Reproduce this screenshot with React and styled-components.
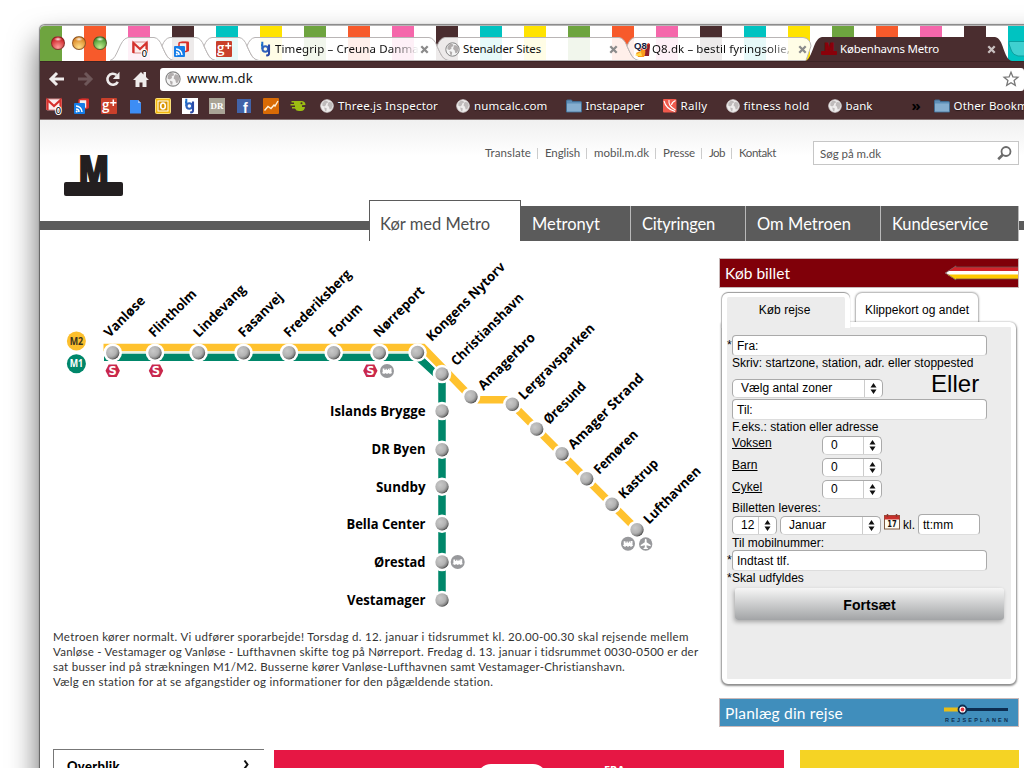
import React, { useLayoutEffect, useRef } from 'react';
import styled, { createGlobalStyle } from 'styled-components';

const ui = '"Noto Sans", "Open Sans", sans-serif';
const humanist = 'Lato, "Liberation Sans", sans-serif';
const chrome = '#4a2d2f';
const grey = '#5b5b5b';

const GlobalStyle = createGlobalStyle`
  html, body { margin: 0; height: 768px; overflow: hidden; background: #fff; }
  * { box-sizing: border-box; }
  svg { display: block; overflow: visible; flex: none; }
`;

/* ---------- text that is tracked to a fixed measure ---------- */
const Line = styled.span`
  display: inline-block;
  white-space: nowrap;
`;

function Fit({ w, children }) {
  const ref = useRef(null);
  useLayoutEffect(() => {
    const el = ref.current;
    el.style.letterSpacing = '0px';
    const natural = el.getBoundingClientRect().width;
    el.style.letterSpacing = `${(w - natural) / el.textContent.length}px`;
  }, [w]);
  return <Line ref={ref}>{children}</Line>;
}

/* ---------- window ---------- */
const Desktop = styled.div`
  width: 1024px;
  height: 768px;
  overflow: hidden;
  padding: 25px 0 0 40px;
`;

const Window = styled.div`
  width: 1100px;
  height: 1000px;
  background: #fff;
  border-radius: 5px 0 0 0;
  box-shadow: 0 0 1px 0.5px rgba(0, 0, 0, 0.45), 0 17px 30px 1px rgba(0, 0, 0, 0.6);
`;

const TabStrip = styled.div`
  height: 36px;
  padding: 11px 0 0 0;
  display: flex;
  border-top: 1px solid #b5b5b5;
  border-radius: 5px 0 0 0;
  background: repeating-linear-gradient(
    90deg,
    #6ea43f 0 22px, #fff 22px 44px,
    #f75a2b 44px 66px, #fff 66px 88px,
    #f567ab 88px 110px, #fff 110px 132px,
    #4a2d2f 132px 154px, #fff 154px 176px,
    #00c3c1 176px 198px, #fff 198px 220px,
    #ffe300 220px 242px, #fff 242px 264px
  );
`;

const Lights = styled.div`
  width: 70px;
  display: flex;
  gap: 7px;
  padding-left: 11px;
  margin-top: -1px;
`;

const Light = styled.span`
  width: 14px;
  height: 14px;
  border-radius: 50%;
  border: 1px solid rgba(70, 30, 20, 0.55);
  background: radial-gradient(ellipse 4px 2px at 50% 18%, rgba(255, 255, 255, 0.95), transparent),
    radial-gradient(circle at 50% 85%, ${(p) => p.$glow} 0, ${(p) => p.$tone} 70%);
`;

const TabBox = styled.div`
  position: relative;
  width: ${(p) => p.$w}px;
  height: 24px;
  display: flex;
  align-items: center;
  padding-left: ${(p) => p.$pad}px;
  gap: ${(p) => p.$gap ?? 3}px;
  font: 11.5px/22px ${ui};
  color: ${(p) => (p.$active ? '#fff' : '#111')};
  z-index: ${(p) => (p.$active ? 1 : 0)};
  > * { position: relative; }
`;

const TabShape = styled.svg`
  && { position: absolute; left: 0; top: 0; }
`;

const TabLabel = styled.span`
  flex: 1;
  min-width: 0;
  overflow: hidden;
  white-space: nowrap;
  mask-image: ${(p) => (p.$fade ? 'linear-gradient(90deg, #000 80%, transparent 100%)' : 'none')};
`;

const CloseMark = styled.span`
  width: 9px;
  margin-right: ${(p) => p.$mr}px;
`;

function Close({ mr, color = '#8b8b8b' }) {
  return (
    <CloseMark $mr={mr}>
      <svg width="9" height="9" viewBox="0 0 9 9">
        <path d="M1.3 1.3 7.7 7.7M7.7 1.3 1.3 7.7" stroke={color} strokeWidth="2.3" />
      </svg>
    </CloseMark>
  );
}

function Tab({ w, kind = 'mid', pad, gap, children }) {
  const shapes = {
    first: `M0 23.5C8 22 9 2 18 .5H${w - 8}Q${w - 3} 1 ${w} 9C${w + 5} 20 ${w + 6} 22 ${w + 12} 23.5Z`,
    mid: `M12 23.5C6 22 5 20 0 9Q3 1 8 .5H${w - 8}Q${w - 3} 1 ${w} 9C${w + 5} 20 ${w + 6} 22 ${w + 12} 23.5Z`,
    last: `M12 23.5C6 22 5 20 0 9Q3 1 8 .5H${w - 8}Q${w - 1} 1 ${w} 9L${w - 5} 23.5Z`,
    active: `M-6 24C2 22 2 1 11 0H${w - 15}C${w - 6} 1 ${w - 7} 22 ${w + 2} 24Z`,
  };
  const active = kind === 'active';
  return (
    <TabBox $w={w} $pad={pad} $gap={gap} $active={active}>
      <TabShape width={w} height="24">
        <path d={shapes[kind]} fill={active ? chrome : 'rgba(255,255,255,.9)'} stroke={active ? 'none' : '#b9b5b5'} />
      </TabShape>
      {children}
    </TabBox>
  );
}

/* ---------- small icons ---------- */
const Gmail = () => (
  <svg width="17" height="17" viewBox="0 0 17 17">
    <rect x="0.5" y="1" width="15" height="11" rx="1" fill="#fbeeee" stroke="#d98c8c" />
    <path d="M1.5 12V2L8 8l6.500-6v10" fill="none" stroke="#d6312d" strokeWidth="2.2" />
    <text x="9.500" y="16" fontFamily="DejaVu Sans" fontSize="9" fill="#000" stroke="#fff" strokeWidth="2" paintOrder="stroke">0</text>
  </svg>
);
const Reader = () => (
  <svg width="16" height="16" viewBox="0 0 16 16">
    <rect x="7" y="0.500" width="8" height="10" rx="1" fill="#d9302a" />
    <rect x="5" y="1.500" width="8" height="9" rx="1" fill="#f1f1f1" stroke="#d9302a" strokeWidth="1.500" />
    <rect x="0" y="5" width="11" height="11" rx="1" fill="#157de8" />
    <path d="M2 8a6 6 0 0 1 6 6M2 11a3 3 0 0 1 3 3" fill="none" stroke="#fff" strokeWidth="1.500" />
    <circle cx="2.700" cy="13.400" r="1" fill="#fff" />
  </svg>
);
const GPlus = () => (
  <svg width="16" height="16" viewBox="0 0 16 16">
    <rect width="16" height="16" rx="1" fill="#c9402b" />
    <text x="1" y="11.500" fontFamily="Open Sans" fontWeight="600" fontSize="13.500" fill="#fff">g</text>
    <path d="M12.300 1.500v6.500M9.200 4.800h6.200" stroke="#fff" strokeWidth="1.500" />
  </svg>
);
const Doc = () => (
  <svg width="12" height="15" viewBox="0 0 12 15">
    <path d="M0 1h8l3 3v10.500H0z" fill="#3d8df5" />
    <path d="M8 1v3h3" fill="#9fc6fb" />
  </svg>
);
const Outlook = () => (
  <svg width="16" height="16" viewBox="0 0 16 16">
    <rect x=".5" y=".5" width="15" height="15" rx="1" fill="#f2b70f" stroke="#fbe07a" />
    <rect x="3" y="3" width="10" height="10" fill="#d99400" stroke="#fff" />
    <ellipse cx="8" cy="8" rx="2.300" ry="3" fill="none" stroke="#fff" strokeWidth="1.600" />
  </svg>
);
const Timegrip = ({ bg = 'none' }) => (
  <svg width="16" height="16" viewBox="0 0 16 16">
    <rect width="16" height="16" fill={bg} />
    <path d="M4.300 .8V8.300M3 4.300h2" fill="none" stroke="#1d6fc9" strokeWidth="2" />
    <circle cx="7.300" cy="8" r="2.800" fill="none" stroke="#2f63bd" strokeWidth="2" />
    <path d="M11 3.500V12.500Q11 14.800 8.200 14.300" fill="none" stroke="#2b4aa6" strokeWidth="2.100" />
  </svg>
);
const Dr = () => (
  <svg width="16" height="16" viewBox="0 0 16 16">
    <rect width="16" height="16" fill="#a9a496" />
    <text x="1.500" y="10.500" fontFamily="Liberation Serif" fontWeight="700" fontSize="7.500" textLength="13" lengthAdjust="spacingAndGlyphs" fill="#fff">DR</text>
  </svg>
);
const Facebook = () => (
  <svg width="14" height="14" viewBox="0 0 14 14">
    <rect width="14" height="14" fill="#4263a8" />
    <text x="6" y="13.500" fontFamily="Liberation Sans" fontWeight="700" fontSize="14" fill="#fff">f</text>
  </svg>
);
const Analytics = () => (
  <svg width="16" height="16" viewBox="0 0 16 16">
    <rect width="16" height="16" rx="1" fill="#d96b05" />
    <path d="M1.500 12.500 5 8.500l3 2 3-3.500 1 1 3-5" fill="none" stroke="#fff0d8" strokeWidth="1.400" />
  </svg>
);
const Endomondo = () => (
  <svg width="16" height="14" viewBox="0 0 16 14">
    <path d="M5 2H12Q15.500 2.500 15.500 6L12 6.300V8h3q-.5 4-4 4H9Q6 12 5 9.500H2V8h3V6.500H.5V5H4V3.500H1.500V2z" fill="#9cbd12" />
    <circle cx="11.500" cy="4.300" r="1" fill={chrome} />
  </svg>
);
const Globe = ({ size = 15, outline }) => (
  <svg width={size} height={size} viewBox="0 0 15 15">
    <circle cx="7.500" cy="7.500" r="6.700" fill={outline ? '#f4f4f4' : '#efeded'} stroke={outline ? '#858585' : '#dcd8d8'} />
    <path
      d="M2.500 4.500 5 1.800l3 .4.500 1.800L6.300 5l.2 1.500L4.500 8l-2-.8zM9.500 3l3 .8 1.200 3-1.500 4-1.800.4-.8-3-1.500-1.200.6-2.500zM4.500 9l2.700 1-.4 3-1.500-.3z"
      fill="#a5a0a0"
      opacity={outline ? 0.85 : 0.65}
    />
  </svg>
);
const Folder = () => (
  <svg width="16" height="14" viewBox="0 0 16 14">
    <path d="M.5 2q0-1 1-1h4l1 1.500h8q1 0 1 1V13H.5z" fill="#5f8fb8" stroke="#426d92" />
    <path d="M1 4.500h14V12.500H1z" fill="#86aecf" />
  </svg>
);
const RallyIcon = () => (
  <svg width="14" height="14" viewBox="0 0 14 14">
    <rect width="13.500" height="13.500" rx="1" fill="#f0594c" />
    <path d="M1 2q2 8 11 10.500M6 1q-1 6 6.500 10M12.500 1.500Q9 3 8.500 6" fill="none" stroke="#fff" strokeWidth="1.100" />
  </svg>
);
const Q8 = () => (
  <svg width="17" height="17" viewBox="0 0 17 17">
    <path d="M4 7 15 2l1 2-2 11H6z" fill="#d9331c" />
    <path d="M2 12 10 8l2 3-2 5H4z" fill="#f99b1c" />
    <path d="M1 14l6-3 1 4H3z" fill="#ffd84a" />
    <path d="M12 5l4-2-1 12h-4z" fill="#8c1f2d" />
    <text x="0" y="7.500" fontFamily="Liberation Sans" fontWeight="700" fontSize="9.500" fill="#111b40" stroke="#fff" strokeWidth="1" paintOrder="stroke">Q8</text>
  </svg>
);
const MetroIcon = () => (
  <svg width="16" height="14" viewBox="0 0 16 14">
    <rect y="9" width="16" height="4" rx="1" fill="#8a0009" />
    <text x="3.500" y="10" fontFamily="Open Sans" fontWeight="800" fontSize="12.500" textLength="9.500" lengthAdjust="spacingAndGlyphs" fill="#8a0009" stroke="#8a0009">M</text>
  </svg>
);

/* ---------- toolbar + bookmarks ---------- */
const Toolbar = styled.div`
  height: 32px;
  background: ${chrome};
  border-top: 1px solid #3d2425;
  display: flex;
  align-items: center;
  padding: 3px 0 0 9px;
`;
const NavIcon = styled.span`
  width: ${(p) => p.$w}px;
  opacity: ${(p) => (p.$dim ? 0.22 : 1)};
`;
const Omnibox = styled.div`
  width: 864px;
  height: 23px;
  margin-top: 0;
  background: #fff;
  border-radius: 3px;
  display: flex;
  align-items: center;
  padding: 0 5px;
  gap: 6px;
  font: 13px/20px ${ui};
  color: #111;
`;
const Address = styled.span`
  padding-bottom: 2px;
`;
const Spacer = styled.span`
  flex: 1;
`;
const Bookmarks = styled.div`
  height: 27px;
  background: ${chrome};
  border-bottom: 1px solid #857474;
  display: flex;
  align-items: center;
  font: 11.5px/20px ${ui};
  color: #fff;
`;
const Favicons = styled.div`
  display: grid;
  grid-template-columns: repeat(10, 27px);
  justify-items: center;
  align-items: center;
  margin: 0 9px 0 1px;
`;
const Links = styled.div`
  display: flex;
  gap: 18px;
`;
const Bookmark = styled.div`
  display: flex;
  align-items: center;
  gap: 4px;
  text-shadow: 0 1px 1px rgba(0, 0, 0, 0.5);
`;
const More = styled.span`
  margin: -2px 13px 0 39px;
  width: 9px;
  color: #000;
  font: 700 15px/16px ${ui};
`;

/* ---------- page header ---------- */
const Page = styled.div`
  background: linear-gradient(#f0f0f0, #fff 36px);
  font-family: ${humanist};
`;
const Header = styled.header`
  height: 80px;
  display: flex;
`;
const LogoBox = styled.div`
  width: 445px;
  padding: 34px 0 0 24px;
`;
const TopLinks = styled.div`
  width: 328px;
  padding-top: 25px;
  height: 40px;
  display: flex;
  font-size: 11.5px;
  line-height: 15px;
  color: #555;
`;
const TopLink = styled.a`
  padding: 0 7px;
  border-left: 1px solid #ccc;
  height: 11px;
  line-height: 10px;
  margin-top: 3px;
  margin-right: -1px;
  &:first-child {
    padding-left: 0;
    border-left: 0;
  }
`;
const Search = styled.div`
  width: 206px;
  height: 24px;
  margin-top: 21px;
  border: 1px solid #c6c6c6;
  background: #fff;
  display: flex;
  align-items: center;
  padding: 1px 6px 0;
  justify-content: space-between;
  font-size: 11.5px;
  color: #555;
`;
const Nav = styled.nav`
  height: 41px;
  display: flex;
  align-items: flex-end;
  padding-left: 329px;
  background: linear-gradient(${grey}, ${grey}) 0 21px / 100% 9px no-repeat;
`;
const NavTab = styled.a`
  width: ${(p) => p.$w}px;
  height: ${(p) => (p.$active ? 41 : 35)}px;
  padding: ${(p) => (p.$active ? '8px 0 0 10px' : '3px 0 0 11px')};
  font-size: 16.5px;
  line-height: 31px;
  color: ${(p) => (p.$active ? '#4f4f4f' : '#fff')};
  background: ${(p) => (p.$active ? '#fff' : grey)};
  border: solid ${grey};
  border-width: ${(p) => (p.$active ? '1px 1px 0 1px' : '0')};
  border-right: 1px solid ${(p) => (p.$active ? grey : '#b9b9b9')};
`;

/* ---------- main ---------- */
const Main = styled.main`
  height: 509px;
  display: flex;
`;
const Left = styled.section`
  width: 679px;
`;
const Notice = styled.div`
  padding: 9px 0 0 13px;
  font-size: 11.5px;
  line-height: 15px;
  color: #333;
  display: flex;
  flex-direction: column;
  align-items: flex-start;
`;
const Sidebar = styled.aside`
  width: 300px;
  padding-top: 17px;
`;
const TitleBar = styled.div`
  height: ${(p) => p.$h}px;
  border: 1px solid #c9b9b9;
  background: ${(p) => p.$tone};
  color: #fff;
  font-size: 15.5px;
  line-height: 26px;
  display: flex;
  justify-content: space-between;
  align-items: center;
  padding: 0 0 0 5px;
`;
const Booking = styled.div`
  margin: 5px 3px 14px;
  font: 12px/15px "Liberation Sans", Arial, sans-serif;
  letter-spacing: 0.04px;
  color: #000;
`;
const BookingTabs = styled.div`
  display: flex;
  gap: 6px;
  height: 29px;
`;
const BookingTab = styled.div`
  position: relative;
  z-index: ${(p) => (p.$active ? 2 : 0)};
  width: ${(p) => p.$w}px;
  height: ${(p) => (p.$active ? 35 : 30)}px;
  border: solid #fff;
  border-width: 4px 5px 0;
  border-radius: 6px 6px 0 0;
  background: ${(p) => (p.$active ? '#ececec' : '#fff')};
  background-clip: padding-box;
  box-shadow: ${(p) => (p.$active ? '0 -1px 1px #999, -1px 0 1px #bbb' : '0 0 2px 1px #aaa')};
  text-align: center;
  line-height: 27px;
  padding-right: ${(p) => (p.$active ? 3 : 0)}px;
  white-space: nowrap;
  clip-path: inset(-3px -3px ${(p) => (p.$active ? 0 : 1)}px -3px);
`;
const Panel = styled.div`
  position: relative;
  z-index: 1;
  height: 362px;
  border: 5px solid #fff;
  border-radius: 2px 6px 6px 6px;
  background: #ececec;
  box-shadow: 0 1px 2px 1px rgba(0, 0, 0, 0.45);
  padding: 8px 0 0 5px;
`;
const Required = styled.div`
  display: flex;
  margin-left: -5px;
  &::before {
    content: '*';
    width: 5px;
    line-height: ${(p) => p.$lh ?? 21}px;
  }
`;
const Field = styled.div`
  width: ${(p) => p.$w ?? 255}px;
  height: 21px;
  border: 1px solid #aaa;
  border-bottom-color: #ddd;
  border-radius: 4px;
  background: #fff;
  padding-left: 4px;
  line-height: 20px;
`;
const Hint = styled.div`
  height: ${(p) => p.$h ?? 15}px;
  line-height: 15px;
  white-space: nowrap;
`;
const Row = styled.div`
  display: flex;
  align-items: flex-start;
  height: ${(p) => p.$h}px;
  padding-top: ${(p) => p.$top ?? 0}px;
`;
const SelectBox = styled.div`
  width: ${(p) => p.$w}px;
  height: 19px;
  border: 1px solid #aaa;
  border-bottom-color: #d5d5d5;
  border-radius: 5px;
  background: #fff;
  display: flex;
  padding-left: ${(p) => p.$pad ?? 8}px;
  line-height: 17px;
  margin-top: ${(p) => p.$mt ?? 0}px;
  margin-right: ${(p) => p.$mr ?? 0}px;
`;
const Stepper = styled.span`
  width: 18px;
  margin-left: auto;
  border-left: 1px solid #ccc;
  display: grid;
  place-items: center;
`;
const Or = styled.div`
  margin: -9px 0 0 48px;
  font-size: 24px;
  line-height: 28px;
`;
const Passenger = styled.span`
  width: 90px;
  text-decoration: underline;
  line-height: 17px;
  text-underline-offset: 1px;
`;
const Kl = styled.span`
  width: 18px;
  padding-left: 3px;
  line-height: 22px;
`;
const Continue = styled.div`
  width: 269px;
  height: 32px;
  margin: 2px 0 0 3px;
  border-radius: 3px;
  background: linear-gradient(#f6f6f6, #a2a4a6);
  box-shadow: -1px 2px 4px rgba(0, 0, 0, 0.3);
  font-weight: 700;
  font-size: 14px;
  line-height: 34px;
  text-align: center;
`;

function Select({ children, ...p }) {
  return (
    <SelectBox {...p}>
      {children}
      <Stepper>
        <svg width="7" height="11" viewBox="0 0 7 11">
          <path d="M.5 4.500 3.500 0l3 4.500zM.5 6.500h6L3.500 11z" fill="#111" />
        </svg>
      </Stepper>
    </SelectBox>
  );
}

/* ---------- promo row ---------- */
const Promos = styled.div`
  display: flex;
  padding-left: 13px;
  height: 200px;
  margin-top: -1px;
`;
const Overview = styled.div`
  width: 211px;
  border: solid #777;
  border-width: 1px 0 0 1px;
  padding: 8px 13px;
  display: flex;
  align-items: flex-start;
  justify-content: space-between;
  font-size: 13px;
  font-weight: 900;
  line-height: 16px;
`;
const RedPromo = styled.div`
  width: 510px;
  margin: 1px 16px 0 10px;
  background: #e61744;
  display: flex;
  padding: 14px 0 0 203px;
  gap: 57px;
  color: #fff;
  font: 700 11px/12px ${ui};
`;
const Pill = styled.span`
  width: 70px;
  height: 40px;
  border-radius: 14px;
  background: #fff;
`;
const YellowPromo = styled.div`
  width: 219px;
  margin-top: 1px;
  background: #f5d324;
`;

/* ---------- metro map ---------- */
const diagonal = [
  ['Vanløse', 109.6, 338, 51.5], ['Flintholm', 154.2, 338, 61], ['Lindevang', 198.8, 338, 67.5],
  ['Fasanvej', 243.8, 338, 56.5], ['Frederiksberg', 289.2, 338, 89], ['Forum', 334.2, 338, 41],
  ['Nørreport', 379, 338, 65.5], ['Kongens Nytorv', 431.8, 342, 105], ['Christianshavn', 456.5, 366.5, 96],
  ['Amagerbro', 483.5, 391, 74.5], ['Lergravsparken', 524, 400.5, 101], ['Øresund', 549, 425, 53.5],
  ['Amager Strand', 573.5, 450, 100.4], ['Femøren', 599.2, 475, 56], ['Kastrup', 624, 499.5, 49.5],
  ['Lufthavnen', 649, 524.7, 74.5],
];
const vertical = [
  ['Islands Brygge', 411, 95.5], ['DR Byen', 449.5, 54], ['Sundby', 486.7, 49.5],
  ['Bella Center', 524, 79], ['Ørestad', 562, 51.5], ['Vestamager', 600, 78.5],
];
const stops = [
  [112.7, 352.7], [155, 352.7], [198.5, 352.7], [243.5, 352.7], [289, 352.7], [333.7, 352.7],
  [379.3, 352.7], [417.5, 352.5], [442, 374], [471, 396.7], [512.3, 404.3], [536.7, 429],
  [562, 453.7], [586.7, 478.7], [612, 504.3], [637, 529.7],
  [442, 411], [442, 449.7], [442, 486.7], [442, 523.7], [442, 562], [442, 600],
];

const STrain = ({ x, y }) => (
  <g transform={`translate(${x} ${y})`}>
    <path d="M-7.200 0-4-6.200H4L7.200 0 4 6.200H-4z" fill="#c9284c" />
    <text x="0" y="4.200" textAnchor="middle" fontFamily="DejaVu Sans" fontWeight="700" fontSize="11.500" fill="#fff">S</text>
  </g>
);
const Train = ({ x, y }) => (
  <g transform={`translate(${x} ${y})`}>
    <circle r="7" fill="#98999c" />
    <path d="M-4.300-1V-2.500h1.800V-1h1V-2.300H-.2V-1h1V-2.300H2V-1h.5V-2.800H4.500V1.500H5v.8H-5V1.500h.7z" fill="#fff" />
    <path d="M-3.800 2.300h1.600v.7h-1.600zM-.8 2.300H.8v.7H-.8zM2.200 2.300h1.600v.7H2.200z" fill="#fff" />
  </g>
);
const Badge = ({ y, fill, color, label }) => (
  <g>
    <circle cx="76.400" cy={y} r="9.500" fill={fill} />
    <text x="76.400" y={y + 3.6} textAnchor="middle" fontFamily="Open Sans" fontWeight="700" fontSize="10" textLength="13.500" lengthAdjust="spacingAndGlyphs" fill={color}>{label}</text>
  </g>
);

function MetroMap() {
  const label = { fontFamily: 'Open Sans', fontWeight: 700, fontSize: 13.4, lengthAdjust: 'spacingAndGlyphs' };
  return (
    <svg width="679" height="379" viewBox="40 241 679 379">
      <defs>
        <radialGradient id="stop" cx="36%" cy="36%" r="68%">
          <stop offset="0" stopColor="#c9c9c9" />
          <stop offset=".6" stopColor="#b2b2b2" />
          <stop offset=".85" stopColor="#858585" />
          <stop offset="1" stopColor="#444" />
        </radialGradient>
      </defs>
      <g fill="none" strokeWidth="7.500">
        <path d="M104 357.200H418l24 22V600" stroke="#00876a" />
        <path d="M103.500 347.600H423L471 397l3 2.800h34l4.300 4.500L637 529.700" stroke="#ffc22e" />
        <path d="M104 352.500H418" stroke="#dff3e6" strokeWidth="2" />
        <path d="M421 353.500 443 375" stroke="#fff" strokeWidth="1.500" />
      </g>
      {stops.map(([x, y]) => (
        <g key={`${x}-${y}`}>
          <circle cx={x} cy={y} r="9.300" fill="#fff" />
          <circle cx={x} cy={y} r="6.700" fill="url(#stop)" />
        </g>
      ))}
      {diagonal.map(([name, x, y, len]) => (
        <text key={name} {...label} textLength={len} transform={`translate(${x} ${y}) rotate(-45)`}>{name}</text>
      ))}
      {vertical.map(([name, y, len]) => (
        <text key={name} {...label} textLength={len} x={425.5 - len} y={y + 4.8}>{name}</text>
      ))}
      <Badge y={341} fill="#fcbf2d" color="#3a3320" label="M2" />
      <Badge y={363.7} fill="#00876a" color="#fff" label="M1" />
      <STrain x={112.7} y={370.7} />
      <STrain x={156} y={370.7} />
      <STrain x={370.3} y={370.7} />
      <Train x={387} y={371} />
      <Train x={457.7} y={562} />
      <Train x={628} y={543.7} />
      <g transform="translate(645.700 544)">
        <circle r="6.700" fill="#98999c" />
        <path d="M0-5.200q.9 0 .9 1.500v2L5 1v1.200L.9 1.200v2L2.300 4.400v.6H-2.300v-.6L-.9 3.200v-2L-5 2.200V1l4.100-2.700v-2q0-1.500.9-1.500z" fill="#fff" />
      </g>
    </svg>
  );
}

export default function App() {
  return (
    <Desktop>
      <GlobalStyle />
      <Window>
        <TabStrip>
          <Lights>
            <Light $tone="#cf2a2e" $glow="#ff9d9a" />
            <Light $tone="#dd8b2b" $glow="#ffe08a" />
            <Light $tone="#4f9a35" $glow="#c2f08f" />
          </Lights>
          <Tab w={52} kind="first" pad={22}><Gmail /></Tab>
          <Tab w={42} pad={12}><Reader /></Tab>
          <Tab w={43} pad={12}><GPlus /></Tab>
          <Tab w={190} pad={11} gap={1}>
            <Timegrip />
            <TabLabel $fade><Fit w={155}>Timegrip – Creuna Danmark</Fit></TabLabel>
            <Close mr={8} />
          </Tab>
          <Tab w={190} pad={8}>
            <Globe outline /><TabLabel><Fit w={78}>Stenalder Sites</Fit></TabLabel><Close mr={9} />
          </Tab>
          <Tab w={184} kind="last" pad={7} gap={1}>
            <Q8 /><TabLabel $fade><Fit w={138}>Q8.dk – bestil fyringsolie,</Fit></TabLabel><Close mr={4} />
          </Tab>
          <Tab w={199} kind="active" pad={10}>
            <MetroIcon /><TabLabel><Fit w={99}>Københavns Metro</Fit></TabLabel><Close mr={14} color="#c9c0c0" />
          </Tab>
          <svg width="40" height="24">
            <path d="M-1 4.500H40V19H8Q3 18 1.500 14L-1 7z" fill="#3fd0d0" stroke="#0c9fa0" />
          </svg>
        </TabStrip>

        <Toolbar>
          <NavIcon $w={28}>
            <svg width="16" height="14" viewBox="0 0 16 14">
              <path d="M8 1 2 7l6 6M2.500 7H15" fill="none" stroke="#efecec" strokeWidth="3" />
            </svg>
          </NavIcon>
          <NavIcon $w={28} $dim>
            <svg width="16" height="14" viewBox="0 0 16 14">
              <path d="M8 1l6 6-6 6M13.500 7H1" fill="none" stroke="#efecec" strokeWidth="3" />
            </svg>
          </NavIcon>
          <NavIcon $w={28}>
            <svg width="16" height="16" viewBox="0 0 16 16">
              <path d="M12.800 10.800A5.500 5.500 0 1 1 11.500 4" fill="none" stroke="#efecec" strokeWidth="2.600" />
              <path d="M14.500.8V8H7.800z" fill="#efecec" />
            </svg>
          </NavIcon>
          <NavIcon $w={27}>
            <svg width="16" height="16" viewBox="0 0 16 16">
              <path d="M0 9 8 1l2.500 2.500V1H13v5l3 3h-2.500v7h-4v-4.500h-3V16h-4V9z" fill="#efecec" />
            </svg>
          </NavIcon>
          <Omnibox>
            <Globe size={16} outline />
            <Address><Fit w={66}>www.m.dk</Fit></Address>
            <Spacer />
            <svg width="16" height="16" viewBox="0 0 16 16">
              <path d="M8 1.200l1.900 4.700 5 .3-3.800 3.200 1.200 5L8 11.700l-4.300 2.700 1.200-5L1.100 6.200l5-.3z" fill="#fff" stroke="#777" strokeWidth="1.300" />
            </svg>
          </Omnibox>
        </Toolbar>

        <Bookmarks>
          <Favicons>
            <Gmail /><Reader /><GPlus /><Doc /><Outlook /><Timegrip bg="#fff" /><Dr /><Facebook /><Analytics /><Endomondo />
          </Favicons>
          <Links>
            <Bookmark><Globe size={14} /><Fit w={100}>Three.js Inspector</Fit></Bookmark>
            <Bookmark><Globe size={14} /><Fit w={73.5}>numcalc.com</Fit></Bookmark>
            <Bookmark><Folder /><Fit w={59}>Instapaper</Fit></Bookmark>
            <Bookmark><RallyIcon /><Fit w={27}>Rally</Fit></Bookmark>
            <Bookmark><Globe size={14} /><Fit w={66}>fitness hold</Fit></Bookmark>
            <Bookmark><Globe size={14} /><Fit w={27}>bank</Fit></Bookmark>
          </Links>
          <More>»</More>
          <Bookmark><Folder /><Fit w={98}>Other Bookmarks</Fit></Bookmark>
        </Bookmarks>

        <Page>
          <Header>
            <LogoBox>
              <svg width="60" height="42" viewBox="0 0 60 42">
                <rect y="28" width="59" height="14" rx="2" fill="#231f20" />
                <text x="14.500" y="29.500" fontFamily="Open Sans" fontWeight="800" fontSize="39" textLength="30.500" lengthAdjust="spacingAndGlyphs" fill="#231f20" stroke="#231f20" strokeWidth="1.800">M</text>
              </svg>
            </LogoBox>
            <TopLinks>
              <TopLink><Fit w={46}>Translate</Fit></TopLink>
              <TopLink><Fit w={35}>English</Fit></TopLink>
              <TopLink><Fit w={55}>mobil.m.dk</Fit></TopLink>
              <TopLink><Fit w={32}>Presse</Fit></TopLink>
              <TopLink><Fit w={16}>Job</Fit></TopLink>
              <TopLink><Fit w={37}>Kontakt</Fit></TopLink>
            </TopLinks>
            <Search>
              <Fit w={61}>Søg på m.dk</Fit>
              <svg width="15" height="15" viewBox="0 0 15 15">
                <circle cx="9" cy="5.500" r="4.500" fill="none" stroke="#6b6b6b" strokeWidth="1.800" />
                <path d="M5.800 8.800 1.200 13.200" stroke="#6b6b6b" strokeWidth="2.600" />
              </svg>
            </Search>
          </Header>

          <Nav>
            <NavTab $w={152} $active><Fit w={110}>Kør med Metro</Fit></NavTab>
            <NavTab $w={110}><Fit w={68}>Metronyt</Fit></NavTab>
            <NavTab $w={115}><Fit w={73}>Cityringen</Fit></NavTab>
            <NavTab $w={135}><Fit w={94}>Om Metroen</Fit></NavTab>
            <NavTab $w={138}><Fit w={96}>Kundeservice</Fit></NavTab>
          </Nav>

          <Main>
            <Left>
              <MetroMap />
              <Notice>
                <Fit w={636}>Metroen kører normalt. Vi udfører sporarbejde! Torsdag d. 12. januar i tidsrummet kl. 20.00-00.30 skal rejsende mellem</Fit>
                <Fit w={645}>Vanløse - Vestamager og Vanløse - Lufthavnen skifte tog på Nørreport. Fredag d. 13. januar i tidsrummet 0030-0500 er der</Fit>
                <Fit w={572}>sat busser ind på strækningen M1/M2. Busserne kører Vanløse-Lufthavnen samt Vestamager-Christianshavn.</Fit>
                <Fit w={441}>Vælg en station for at se afgangstider og informationer for den pågældende station.</Fit>
              </Notice>
            </Left>

            <Sidebar>
              <TitleBar $tone="#800009" $h={30}>
                <Fit w={65}>Køb billet</Fit>
                <svg width="73" height="16" viewBox="0 0 73 16">
                  <path d="M0 8 11 1V3H73v11H11v1z" fill="#fff" />
                  <path d="M3 6 11 1v1H73V6z" fill="#d2232a" />
                  <path d="M2 9.500H73V14H11v1z" fill="#ffc800" />
                  <path d="M73 2H11V.8L.5 8 11 15v-1H73" fill="none" stroke="#6d5050" strokeWidth=".8" />
                </svg>
              </TitleBar>
              <Booking>
                <BookingTabs>
                  <BookingTab $w={128} $active>Køb rejse</BookingTab>
                  <BookingTab $w={122}>Klippekort og andet</BookingTab>
                </BookingTabs>
                <Panel>
                  <Required><Field>Fra:</Field></Required>
                  <Hint>Skriv: startzone, station, adr. eller stoppested</Hint>
                  <Row $h={28} $top={8}>
                    <Select $w={151}>Vælg antal zoner</Select>
                    <Or>Eller</Or>
                  </Row>
                  <Field>Til:</Field>
                  <Hint>F.eks.: station eller adresse</Hint>
                  {['Voksen', 'Barn', 'Cykel'].map((who) => (
                    <Row key={who} $h={22}>
                      <Passenger>{who}</Passenger>
                      <Select $w={60} $mt={1}>0</Select>
                    </Row>
                  ))}
                  <Hint $h={13}>Billetten leveres:</Hint>
                  <Row $h={22}>
                    <Select $w={45} $mt={2} $mr={3}>12</Select>
                    <Select $w={101} $mt={2} $mr={3}>Januar</Select>
                    <svg width="16" height="16" viewBox="0 0 16 16">
                      <rect x=".5" y="1.500" width="15" height="13.500" fill="#fffdf2" stroke="#7d5a40" />
                      <rect x=".5" y="1.500" width="15" height="4" fill="#c9302c" />
                      <path d="M3.500 0v3M12.500 0v3" stroke="#8c3a30" strokeWidth="1.500" />
                      <text x="8" y="13" textAnchor="middle" fontFamily="DejaVu Sans" fontWeight="700" fontSize="8" textLength="9.500" lengthAdjust="spacingAndGlyphs" fill="#111">17</text>
                    </svg>
                    <Kl>kl.</Kl>
                    <Field $w={62}>tt:mm</Field>
                  </Row>
                  <Hint $h={14}>Til mobilnummer:</Hint>
                  <Required><Field>Indtast tlf.</Field></Required>
                  <Required $lh={15}><Hint>Skal udfyldes</Hint></Required>
                  <Continue>Fortsæt</Continue>
                </Panel>
              </Booking>
              <TitleBar $tone="#408ebc" $h={29}>
                <Fit w={118}>Planlæg din rejse</Fit>
                <svg width="74" height="20" viewBox="0 0 74 20">
                  <rect x="0" y="4.500" width="14" height="4" fill="#e9bd16" />
                  <rect x="20" y="5" width="44" height="3" fill="#0d2d50" />
                  <circle cx="18.500" cy="6.500" r="4" fill="#fff" stroke="#0d2d50" strokeWidth="1.800" />
                  <circle cx="18.500" cy="6.500" r="1.900" fill="#e2323c" />
                  <text x="1" y="18.500" fontFamily="Liberation Sans" fontWeight="700" fontSize="5.500" textLength="63" fill="#0d2d50">REJSEPLANEN</text>
                </svg>
              </TitleBar>
            </Sidebar>
          </Main>

          <Promos>
            <Overview>
              <Fit w={53}>Overblik</Fit>
              <svg width="8" height="12" viewBox="0 0 8 12">
                <path d="M1.500 2.500 4.500 6.500 1.500 10.500" fill="none" stroke="#111" strokeWidth="2" />
              </svg>
            </Overview>
            <RedPromo><Pill />FRA</RedPromo>
            <YellowPromo />
          </Promos>
        </Page>
      </Window>
    </Desktop>
  );
}
